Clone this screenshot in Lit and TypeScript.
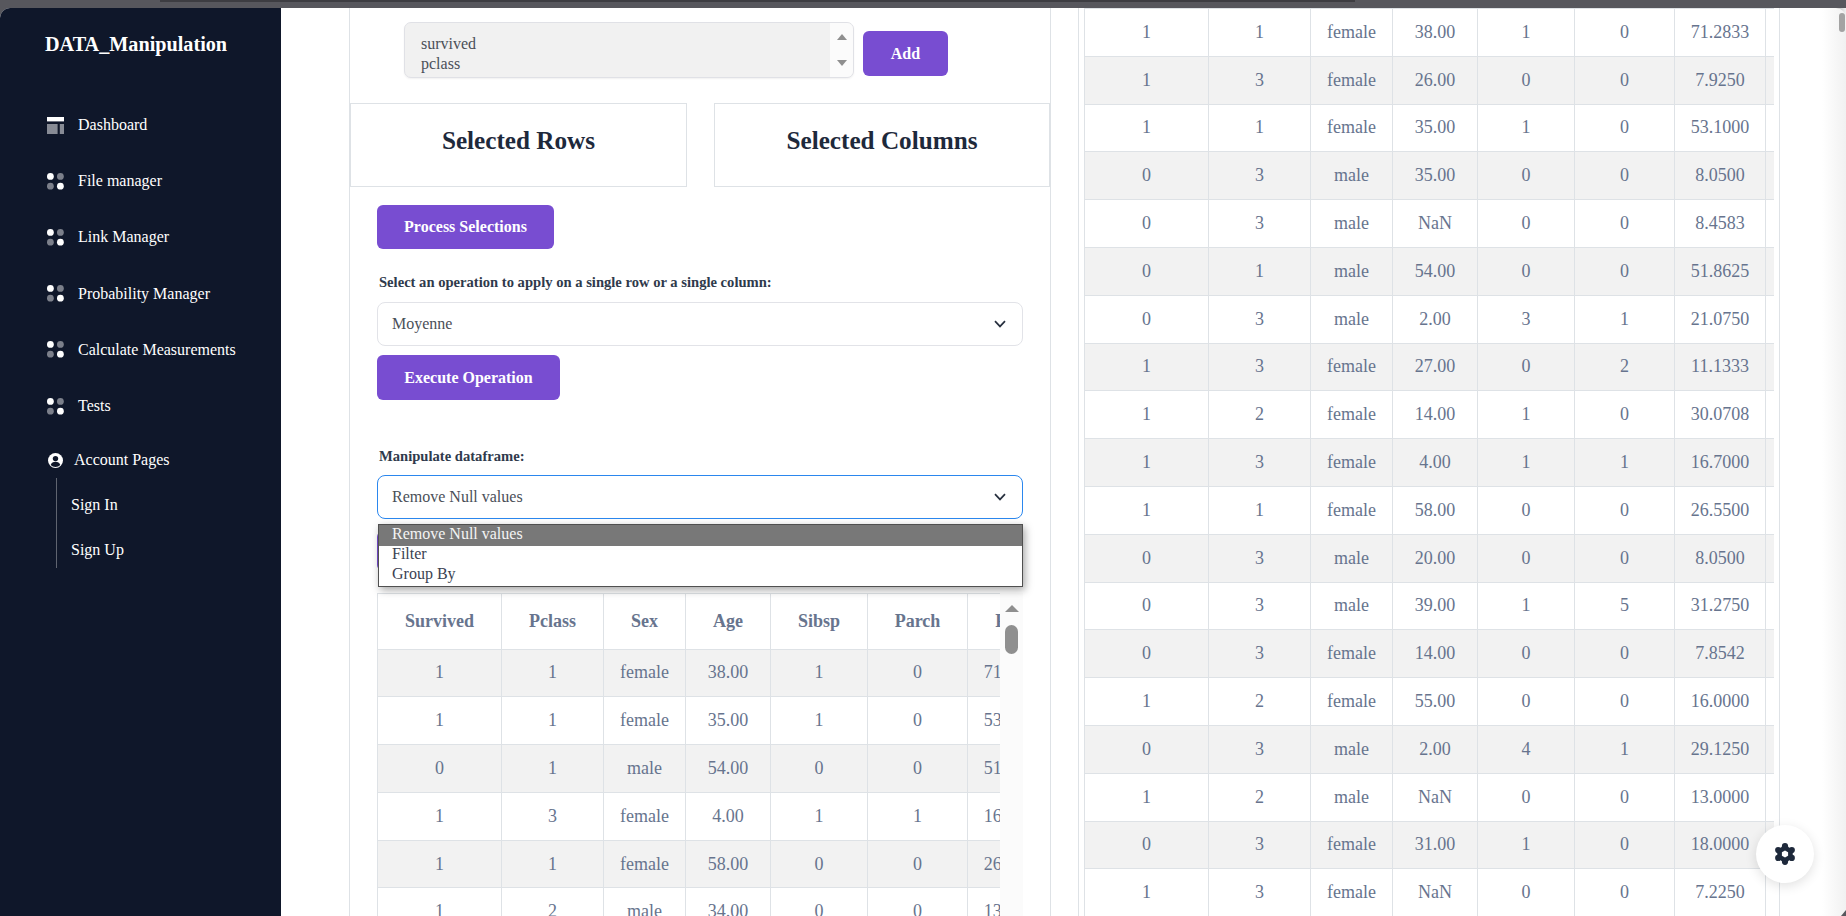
import { LitElement, html, css, svg } from "lit";
import { customElement } from "lit/decorators.js";

type Row = (string | number)[];

const LEFT_ROWS: Row[] = [
  [1, 1, "female", "38.00", 1, 0, "71.2833"],
  [1, 1, "female", "35.00", 1, 0, "53.1000"],
  [0, 1, "male", "54.00", 0, 0, "51.8625"],
  [1, 3, "female", "4.00", 1, 1, "16.7000"],
  [1, 1, "female", "58.00", 0, 0, "26.5500"],
  [1, 2, "male", "34.00", 0, 0, "13.0000"],
];

const RIGHT_ROWS: Row[] = [
  [1, 1, "female", "38.00", 1, 0, "71.2833"],
  [1, 3, "female", "26.00", 0, 0, "7.9250"],
  [1, 1, "female", "35.00", 1, 0, "53.1000"],
  [0, 3, "male", "35.00", 0, 0, "8.0500"],
  [0, 3, "male", "NaN", 0, 0, "8.4583"],
  [0, 1, "male", "54.00", 0, 0, "51.8625"],
  [0, 3, "male", "2.00", 3, 1, "21.0750"],
  [1, 3, "female", "27.00", 0, 2, "11.1333"],
  [1, 2, "female", "14.00", 1, 0, "30.0708"],
  [1, 3, "female", "4.00", 1, 1, "16.7000"],
  [1, 1, "female", "58.00", 0, 0, "26.5500"],
  [0, 3, "male", "20.00", 0, 0, "8.0500"],
  [0, 3, "male", "39.00", 1, 5, "31.2750"],
  [0, 3, "female", "14.00", 0, 0, "7.8542"],
  [1, 2, "female", "55.00", 0, 0, "16.0000"],
  [0, 3, "male", "2.00", 4, 1, "29.1250"],
  [1, 2, "male", "NaN", 0, 0, "13.0000"],
  [0, 3, "female", "31.00", 1, 0, "18.0000"],
  [1, 3, "female", "NaN", 0, 0, "7.2250"],
];

const HEADERS = ["Survived", "Pclass", "Sex", "Age", "Sibsp", "Parch", "Fare", ""];

const dotsIcon = svg`<svg class="ico" viewBox="0 0 17 17" width="17" height="17">
  <circle cx="3.4" cy="3.4" r="3.4" fill="#fff"/>
  <circle cx="13.4" cy="3.4" r="3.4" fill="#fff" fill-opacity=".45"/>
  <circle cx="3.4" cy="13.2" r="3.4" fill="#fff" fill-opacity=".45"/>
  <circle cx="13.4" cy="13.2" r="3.4" fill="#fff"/>
</svg>`;

const dashIcon = svg`<svg class="ico" viewBox="0 0 17 17" width="17" height="17">
  <rect x="0" y="0" width="17" height="4.4" fill="#fff"/>
  <rect x="0" y="7" width="10.6" height="10" fill="#fff" fill-opacity=".5"/>
  <rect x="12.8" y="7" width="4.2" height="10" fill="#fff" fill-opacity=".5"/>
</svg>`;

const userIcon = svg`<svg class="ico-user" viewBox="0 0 15 15" width="15" height="15">
  <circle cx="7.5" cy="7.5" r="7.5" fill="#fff"/>
  <circle cx="7.5" cy="5.6" r="2.7" fill="#0f172a"/>
  <path d="M2.7 12.1c.7-2.2 2.6-3.3 4.8-3.3s4.1 1.1 4.8 3.3c-1.2 1.2-2.9 1.9-4.8 1.9s-3.6-.7-4.8-1.9z" fill="#0f172a"/>
</svg>`;

const chevron = svg`<svg class="chev" viewBox="0 0 12 8" width="12" height="8">
  <path d="M1 1.2 6 6.4l5-5.2" fill="none" stroke="#27303f" stroke-width="1.7"/>
</svg>`;

const gearIcon = svg`<svg viewBox="0 0 22 22" width="22" height="22">
  <g fill="#1e293b">
    <circle cx="11" cy="11" r="7.8"/>
    <circle cx="11" cy="3.2" r="3.1"/>
    <circle cx="11" cy="18.8" r="3.1"/>
    <circle cx="4.2" cy="7.1" r="3.1"/>
    <circle cx="17.8" cy="7.1" r="3.1"/>
    <circle cx="4.2" cy="14.9" r="3.1"/>
    <circle cx="17.8" cy="14.9" r="3.1"/>
  </g>
  <polygon points="11,7.4 14.1,9.2 14.1,12.8 11,14.6 7.9,12.8 7.9,9.2" fill="#fff"/>
</svg>`;

@customElement("app-root")
export class AppRoot extends LitElement {
  static styles = css`
    :host {
      display: block;
      position: relative;
      width: 1846px;
      height: 916px;
      overflow: hidden;
      background: #57575d;
      font-family: "Liberation Serif", "Times New Roman", serif;
      color: #4a5568;
    }
    * { box-sizing: border-box; }

    .topbar { height: 8px; }
    .topbar-tab {
      height: 2px;
      margin-left: 160px;
      width: 1195px;
      background: #3d3d42;
    }

    .window {
      display: flex;
      height: 908px;
      background: #fff;
      border-radius: 10px 10px 0 0;
      overflow: hidden;
    }

    /* Sidebar */
    .sidebar {
      width: 281px;
      flex: none;
      background: #0f172a;
      color: #fff;
      font-size: 16px;
      padding-left: 45px;
    }
    .brand {
      height: 73px;
      margin-bottom: 16px;
      display: flex;
      align-items: center;
      font-size: 20.2px;
      font-weight: 700;
    }
    .nav-item {
      height: 56.2px;
      display: flex;
      align-items: center;
      padding-left: 2px;
      gap: 14px;
    }
    .ico { flex: none; }
    .account {
      height: 52px;
      display: flex;
      align-items: center;
      padding-left: 3px;
      gap: 11px;
    }
    .subs {
      margin: -8px 0 0 11px;
      height: 90px;
      border-left: 1px solid #5f6470;
      padding: 4.5px 0 0 14px;
    }
    .sub {
      height: 45px;
      display: flex;
      align-items: center;
    }

    /* Main */
    .main {
      flex: 1;
      display: flex;
      padding-left: 68px;
      gap: 27px;
      min-width: 0;
    }
    .card {
      width: 702px;
      flex: none;
      border-left: 1px solid #dee2e6;
      border-right: 1px solid #dee2e6;
      overflow: hidden;
    }
    .card.right { padding: 0 5px 0 5px; }

    .picker {
      display: flex;
      align-items: flex-start;
      gap: 9px;
      padding: 14px 0 0 54px;
    }
    .listbox {
      width: 450px;
      height: 56px;
      display: flex;
      background: #f1f1f1;
      border: 1px solid #e0e1e6;
      border-radius: 7px;
      box-shadow: 0 1px 2px rgba(0,0,0,.06);
      overflow: hidden;
      font-size: 16px;
      line-height: 19.5px;
      color: #4a4f58;
    }
    .listbox-items {
      flex: 1;
      padding: 11px 0 0 16px;
    }
    .listbox-bar {
      width: 23px;
      background: #fbfbfb;
      display: flex;
      flex-direction: column;
      align-items: center;
      justify-content: space-between;
      padding: 11px 0 11px;
    }
    .arrow-up, .arrow-down {
      width: 0;
      height: 0;
      border-left: 5.5px solid transparent;
      border-right: 5.5px solid transparent;
    }
    .arrow-up { border-bottom: 6px solid #8f8f8f; }
    .arrow-down { border-top: 6px solid #8f8f8f; }

    .btn {
      display: flex;
      align-items: center;
      justify-content: center;
      border: 0;
      background: #784dd1;
      color: #fff;
      font-family: inherit;
      font-weight: 700;
      font-size: 16px;
      border-radius: 6px;
      padding: 0;
    }
    .btn-add { width: 85px; height: 45px; margin-top: 9px; }
    .btn-process { width: 177px; height: 44px; margin: 18px 0 0 27px; }
    .btn-exec { width: 183px; height: 45px; margin: 9px 0 0 27px; }
    .btn-hidden { width: 183px; height: 40px; margin: 12px 0 0 27px; }

    .selected {
      display: grid;
      grid-template-columns: 337px 336px;
      justify-content: space-between;
      margin-top: 25px;
    }
    .selected-box {
      height: 84px;
      border: 1px solid #dee2e6;
      display: flex;
      justify-content: center;
      padding-top: 22px;
      font-size: 25.2px;
      line-height: 30px;
      font-weight: 700;
      color: #1e293b;
    }

    .label {
      margin: 23px 0 0 29px;
      height: 20px;
      line-height: 20px;
      font-size: 14.6px;
      font-weight: 700;
      color: #2f3a4c;
    }
    .label.manip { margin-top: 46px; }

    .select {
      position: relative;
      margin: 10px 27px 0 27px;
      height: 44px;
      display: flex;
      align-items: center;
      justify-content: space-between;
      padding: 0 16px 0 14px;
      border: 1px solid #e2e3e8;
      border-radius: 8px;
      font-size: 16px;
      color: #4a4f58;
    }
    .select.focus {
      margin-top: 9px;
      border: 1.5px solid #2b87ee;
    }
    .menu {
      position: absolute;
      left: 0;
      right: -1px;
      top: calc(100% + 6px);
      border: 1px solid #505050;
      background: #fff;
      box-shadow: 2px 3px 8px rgba(0,0,0,.35);
      font-size: 16px;
      color: #3b4252;
      z-index: 2;
    }
    .opt { padding-left: 13px; height: 20px; line-height: 15px; }
    .opt.on { background: #787878; color: #f4f4f4; height: 21px; line-height: 18px; }

    .table-area {
      display: flex;
      margin: 21.5px 27px 0 27px;
      height: 340px;
    }
    .table-clip {
      width: 623px;
      flex: none;
      overflow: hidden;
    }
    .table-clip.full { width: 690px; }
    .vbar {
      flex: 1;
      background: #fbfbfb;
      display: flex;
      flex-direction: column;
      align-items: center;
      padding-top: 12px;
    }
    .vbar .tri {
      width: 0;
      height: 0;
      border-left: 7px solid transparent;
      border-right: 7px solid transparent;
      border-bottom: 7px solid #8f8f8f;
    }
    .vbar .thumb {
      margin-top: 13px;
      width: 13px;
      height: 29px;
      border-radius: 7px;
      background: #8f8f8f;
    }

    table {
      border-collapse: collapse;
      table-layout: fixed;
      width: 721px;
      font-size: 18px;
      color: #67748e;
      text-align: center;
    }
    col:nth-child(1) { width: 124px; }
    col:nth-child(2) { width: 102px; }
    col:nth-child(3) { width: 82px; }
    col:nth-child(4) { width: 85px; }
    col:nth-child(5) { width: 97px; }
    col:nth-child(6) { width: 100px; }
    col:nth-child(7) { width: 91px; }
    col:nth-child(8) { width: 40px; }
    th, td {
      padding: 0;
      border: 1px solid #dee2e6;
      height: 47.8px;
      font-weight: 400;
    }
    th { height: 56px; font-weight: 700; }
    .stripe-odd tbody tr:nth-child(odd) td { background: #f2f2f2; }
    .stripe-even tbody tr:nth-child(even) td { background: #f2f2f2; }

    /* Overlays */
    .page-track {
      position: absolute;
      top: 8px;
      right: 0;
      bottom: 0;
      width: 24px;
      background: linear-gradient(90deg, rgba(240,240,240,0), #f1f1f1);
      pointer-events: none;
    }
    .page-thumb {
      position: absolute;
      top: 5px;
      right: 1px;
      width: 6px;
      height: 19px;
      border-radius: 3px;
      background: #a3a3a3;
    }
    .page-corner {
      position: absolute;
      right: 0;
      bottom: 0;
      width: 0;
      height: 0;
      border-left: 5px solid transparent;
      border-bottom: 6px solid #57575d;
    }
    .fab {
      position: absolute;
      left: 1756px;
      top: 825px;
      width: 58px;
      height: 58px;
      border-radius: 50%;
      background: #fff;
      box-shadow: 0 3px 12px rgba(0,0,0,.12);
      display: flex;
      align-items: center;
      justify-content: center;
    }
    .fab svg { display: block; }
  `;

  private renderTable(rows: Row[], stripe: string, header: boolean) {
    return html`<table class=${stripe}>
      <colgroup>${HEADERS.map(() => html`<col />`)}</colgroup>
      ${header
        ? html`<thead><tr>${HEADERS.map((h) => html`<th>${h}</th>`)}</tr></thead>`
        : ""}
      <tbody>
        ${rows.map(
          (r) => html`<tr>${r.map((c) => html`<td>${c}</td>`)}<td></td></tr>`
        )}
      </tbody>
    </table>`;
  }

  render() {
    const items = ["File manager", "Link Manager", "Probability Manager", "Calculate Measurements", "Tests"];
    return html`
      <div class="topbar"><div class="topbar-tab"></div></div>
      <div class="window">
        <aside class="sidebar">
          <div class="brand">DATA_Manipulation</div>
          <div class="nav-item">${dashIcon}<span>Dashboard</span></div>
          ${items.map((t) => html`<div class="nav-item">${dotsIcon}<span>${t}</span></div>`)}
          <div class="account">${userIcon}<span>Account Pages</span></div>
          <div class="subs">
            <div class="sub">Sign In</div>
            <div class="sub">Sign Up</div>
          </div>
        </aside>
        <main class="main">
          <section class="card">
            <div class="picker">
              <div class="listbox">
                <div class="listbox-items"><div>survived</div><div>pclass</div></div>
                <div class="listbox-bar"><div class="arrow-up"></div><div class="arrow-down"></div></div>
              </div>
              <button class="btn btn-add">Add</button>
            </div>
            <div class="selected">
              <div class="selected-box">Selected Rows</div>
              <div class="selected-box">Selected Columns</div>
            </div>
            <button class="btn btn-process">Process Selections</button>
            <div class="label">Select an operation to apply on a single row or a single column:</div>
            <div class="select"><span>Moyenne</span>${chevron}</div>
            <button class="btn btn-exec">Execute Operation</button>
            <div class="label manip">Manipulate dataframe:</div>
            <div class="select focus">
              <span>Remove Null values</span>${chevron}
              <div class="menu">
                <div class="opt on">Remove Null values</div>
                <div class="opt">Filter</div>
                <div class="opt">Group By</div>
              </div>
            </div>
            <button class="btn btn-hidden">Apply</button>
            <div class="table-area">
              <div class="table-clip">${this.renderTable(LEFT_ROWS, "stripe-odd", true)}</div>
              <div class="vbar"><div class="tri"></div><div class="thumb"></div></div>
            </div>
          </section>
          <section class="card right">
            <div class="table-clip full">${this.renderTable(RIGHT_ROWS, "stripe-even", false)}</div>
          </section>
        </main>
      </div>
      <div class="page-track"><div class="page-thumb"></div></div>
      <div class="page-corner"></div>
      <div class="fab">${gearIcon}</div>
    `;
  }
}
